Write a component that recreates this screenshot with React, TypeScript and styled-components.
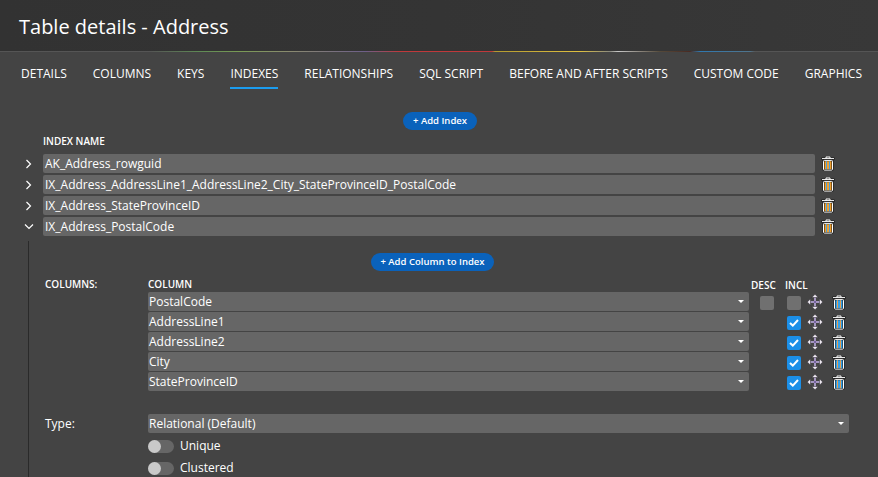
import React from 'react';
import styled, { createGlobalStyle } from 'styled-components';

const GlobalStyle = createGlobalStyle`
  html, body {
    margin: 0;
    padding: 0;
    height: 100%;
    background: #444444;
  }
  * {
    box-sizing: border-box;
  }
`;

/** style */
const Page = styled.div`
  width: 878px;
  height: 477px;
  overflow: hidden;
  background: #444444;
  color: #ffffff;
  font-family: 'Open Sans', 'Liberation Sans', sans-serif;
  font-size: 12px;
`;

const Header = styled.header`
  height: 51px;
  padding: 15px 0 0 19px;
  background: linear-gradient(90deg, #323232 0%, #343434 50%, #383838 100%);
`;

const Title = styled.h1`
  margin: 0;
  font-size: 20px;
  line-height: 24px;
  font-weight: 400;
`;

const RainbowLine = styled.div`
  height: 1px;
  background: linear-gradient(
    90deg,
    #555555 0,
    #555555 150px,
    #5f8a55 200px,
    #7a9a55 240px,
    #8a8a70 290px,
    #6d5f88 365px,
    #c0393b 400px,
    #c0393b 492px,
    #b49a30 495px,
    #e0c040 580px,
    #8a8a80 610px,
    #c8c8c8 618px,
    #554a3a 660px,
    #4a2a22 690px,
    #2f78b0 700px,
    #50748c 750px,
    #555555 755px
  );
`;

const Tabs = styled.nav`
  display: flex;
  gap: 26px;
  height: 37px;
  padding: 13px 0 0 21px;
`;

const Tab = styled.div<{ $active?: boolean }>`
  height: 24px;
  line-height: 17px;
  font-size: 12px;
  white-space: nowrap;
  border-bottom: 2px solid ${(p) => (p.$active ? '#1b9cee' : 'transparent')};
`;

const Content = styled.main`
  padding-top: 23px;
`;

const CenterRow = styled.div`
  display: flex;
  justify-content: center;
  padding-left: 2px;
`;

const PillButton = styled.button`
  height: 18px;
  padding: 0 9.5px;
  border: 0;
  border-radius: 9px;
  background: #0a62bb;
  color: #ffffff;
  font-family: 'Open Sans', 'Liberation Sans', sans-serif;
  font-size: 9.5px;
  font-weight: 600;
  line-height: 18px;
  white-space: nowrap;
`;

const IndexLabel = styled.div`
  margin: 5px 0 0 43px;
  height: 13px;
  line-height: 13px;
  font-size: 10px;
  font-weight: 600;
`;

const IndexList = styled.div`
  display: grid;
  row-gap: 2px;
  margin-top: 6px;
`;

const IndexRow = styled.div`
  display: grid;
  grid-template-columns: 21px 772px 26px;
  align-items: center;
  height: 19px;
  padding-left: 22px;
`;

const Chevron = styled.span`
  display: flex;
  justify-content: center;
  width: 14px;
  color: #ffffff;
`;

const Field = styled.div`
  height: 19px;
  padding-left: 2px;
  background: #666666;
  border-radius: 2px;
  line-height: 19px;
  font-size: 12px;
  white-space: nowrap;
  overflow: hidden;
`;

const SelectField = styled(Field)`
  position: relative;
  padding-left: 1px;

  &::after {
    content: '';
    position: absolute;
    right: 5px;
    top: 8px;
    border-left: 3px solid transparent;
    border-right: 3px solid transparent;
    border-top: 3px solid #ffffff;
  }
`;

const IconCell = styled.span`
  display: flex;
  justify-content: center;
  align-items: center;
`;

const Detail = styled.section`
  margin: 5px 0 0 28px;
  padding: 12px 0 0 16px;
  border-left: 1px solid #2a2a2a;
  height: 240px;
`;

const DetailButtonRow = styled(CenterRow)`
  width: 775px;
  padding-left: 0;
`;

const ColumnsGrid = styled.div`
  display: grid;
  grid-template-columns: 103px 601px 34px 20px 24px 24px;
  grid-template-rows: 14px;
  grid-auto-rows: 20px;
  margin-top: 7px;
  align-items: center;
`;

const MiniLabel = styled.div`
  font-size: 10px;
  font-weight: 600;
  line-height: 13px;
  white-space: nowrap;
`;

const DescLabel = styled(MiniLabel)`
  padding-left: 2px;
`;

const HeaderCell = styled(MiniLabel)`
  align-self: start;
`;

const ColumnSelect = styled(SelectField)`
  align-self: start;
`;

const CheckCell = styled.span<{ $shift: number }>`
  display: flex;
  margin-top: 2px;
  padding-left: ${(p) => p.$shift}px;
`;

const Checkbox = styled.span<{ $checked?: boolean }>`
  display: flex;
  align-items: center;
  justify-content: center;
  width: 14px;
  height: 14px;
  border-radius: 2px;
  background: ${(p) => (p.$checked ? '#1b8fe8' : '#707070')};
`;

const TypeRow = styled.div`
  display: grid;
  grid-template-columns: 103px 701px;
  align-items: center;
  margin-top: 22px;
`;

const ToggleRow = styled.div`
  display: flex;
  align-items: center;
  gap: 6px;
  height: 14px;
  line-height: 12px;
  margin: 6px 0 0 103px;
  & + & {
    margin-top: 8px;
  }
`;

const ToggleText = styled.span`
  padding-bottom: 1px;
`;

const Toggle = styled.span`
  display: block;
  width: 26px;
  height: 13px;
  padding: 0;
  border-radius: 7px;
  background: #666666;

  &::before {
    content: '';
    display: block;
    width: 13px;
    height: 13px;
    border-radius: 50%;
    background: #c9c9c9;
  }
`;

/** icons */
const ChevronRight = () => (
  <svg width="8" height="10" viewBox="0 0 8 10" fill="none" stroke="#fff" strokeWidth="1.2">
    <path d="M1.5 1l4 4-4 4" />
  </svg>
);

const ChevronDown = () => (
  <svg width="10" height="8" viewBox="0 0 10 8" fill="none" stroke="#fff" strokeWidth="1.2">
    <path d="M1 1.5l4 4 4-4" />
  </svg>
);

const Trash = ({ fill, stripe }: { fill: string; stripe: string }) => (
  <svg width="14" height="15" viewBox="0 0 14 15">
    <rect x="0.5" y="1.6" width="13" height="2.2" fill="#111" />
    <path d="M1 2.6h12M5 2.6V1h4v1.6" fill="none" stroke="#fff" strokeWidth="1" />
    <rect x="1.6" y="3.6" width="10.8" height="11.2" rx="1" fill="#0c0c0c" />
    <rect x="2.5" y="4.4" width="9" height="9.7" rx="0.8" fill="none" stroke="#fff" strokeWidth="1" />
    <rect x="3.5" y="5.2" width="7" height="8" fill={fill} />
    <path d="M5.5 5.2v8M8.5 5.2v8" stroke={stripe} strokeWidth="1" />
  </svg>
);

const MoveArrows = () => (
  <svg width="16" height="16" viewBox="0 0 16 16">
    <path d="M8 2v12M2 8h12" stroke="#ffffff" strokeWidth="2" />
    <path d="M8 3v10M3 8h10" stroke="#4a2f80" strokeWidth="1" />
    <path d="M8 .3l3.2 3.2H4.800zM8 15.700l3.200-3.200H4.800zM.3 8l3.200-3.200v6.400zM15.700 8l-3.200-3.200v6.400z" fill="#efeaf2" stroke="#26222c" strokeWidth="0.5" />
  </svg>
);

const Tick = () => (
  <svg width="10" height="8" viewBox="0 0 10 8" fill="none" stroke="#fff" strokeWidth="2">
    <path d="M1 4l2.8 2.6L9 1" />
  </svg>
);

/** data */
const TABS = [
  'DETAILS',
  'COLUMNS',
  'KEYS',
  'INDEXES',
  'RELATIONSHIPS',
  'SQL SCRIPT',
  'BEFORE AND AFTER SCRIPTS',
  'CUSTOM CODE',
  'GRAPHICS'
];

const INDEXES = [
  'AK_Address_rowguid',
  'IX_Address_AddressLine1_AddressLine2_City_StateProvinceID_PostalCode',
  'IX_Address_StateProvinceID',
  'IX_Address_PostalCode'
];

const COLUMNS = ['PostalCode', 'AddressLine1', 'AddressLine2', 'City', 'StateProvinceID'];

/**
 * component
 * Table details - indexes tab
 */
const App: React.FC = () => {
  return (
    <>
      <GlobalStyle />
      <Page>
        <Header>
          <Title>Table details - Address</Title>
        </Header>
        <RainbowLine />
        <Tabs>
          {TABS.map((tab) => (
            <Tab key={tab} $active={tab === 'INDEXES'}>
              {tab}
            </Tab>
          ))}
        </Tabs>
        <Content>
          <CenterRow>
            <PillButton>+ Add Index</PillButton>
          </CenterRow>
          <IndexLabel>INDEX NAME</IndexLabel>
          <IndexList>
            {INDEXES.map((name, i) => (
              <IndexRow key={name}>
                <Chevron>{i === 3 ? <ChevronDown /> : <ChevronRight />}</Chevron>
                <Field>{name}</Field>
                <IconCell>
                  <Trash fill="#f0a030" stripe="#4a9fd8" />
                </IconCell>
              </IndexRow>
            ))}
          </IndexList>
          <Detail>
            <DetailButtonRow>
              <PillButton>+ Add Column to Index</PillButton>
            </DetailButtonRow>
            <ColumnsGrid>
              <HeaderCell>COLUMNS:</HeaderCell>
              <HeaderCell>COLUMN</HeaderCell>
              <DescLabel>DESC</DescLabel>
              <DescLabel>INCL</DescLabel>
              <span />
              <span />
              {COLUMNS.map((col, i) => (
                <React.Fragment key={col}>
                  <span />
                  <ColumnSelect>{col}</ColumnSelect>
                  <CheckCell $shift={11}>{i === 0 && <Checkbox />}</CheckCell>
                  <CheckCell $shift={4}>
                    <Checkbox $checked={i > 0}>{i > 0 && <Tick />}</Checkbox>
                  </CheckCell>
                  <IconCell>
                    <MoveArrows />
                  </IconCell>
                  <IconCell>
                    <Trash fill="#35a0e8" stripe="#e8a050" />
                  </IconCell>
                </React.Fragment>
              ))}
            </ColumnsGrid>
            <TypeRow>
              <span>Type:</span>
              <SelectField>Relational (Default)</SelectField>
            </TypeRow>
            <ToggleRow>
              <Toggle />
              <ToggleText>Unique</ToggleText>
            </ToggleRow>
            <ToggleRow>
              <Toggle />
              <ToggleText>Clustered</ToggleText>
            </ToggleRow>
          </Detail>
        </Content>
      </Page>
    </>
  );
};

export default App;
